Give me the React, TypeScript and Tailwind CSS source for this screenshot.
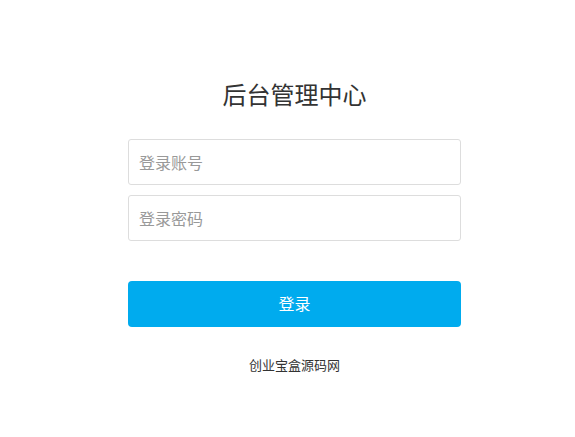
export default function App() {
  return (
    <div
      className="w-[575px] h-[437px] bg-white"
      style={{ fontFamily: '"Liberation Sans", "Noto Sans CJK SC", sans-serif' }}
    >
      <div className="ml-[128px] w-[333px] pt-[78px] flex flex-col">
        <h1 className="text-center text-[24px] leading-[36px] text-[#333]">后台管理中心</h1>

        <div className="mt-[25px] flex flex-col gap-[10px]">
          <input
            className="h-[46px] w-full rounded-[3px] border border-[#ddd] px-[10px] pt-[4px] text-[16px] text-[#333] placeholder:text-[#999] outline-none"
            placeholder="登录账号"
          />
          <input
            type="password"
            className="h-[46px] w-full rounded-[3px] border border-[#ddd] px-[10px] pt-[4px] text-[16px] text-[#333] placeholder:text-[#999] outline-none"
            placeholder="登录密码"
          />
        </div>

        <button className="mt-[40px] h-[46px] w-full rounded-[4px] bg-[#00abee] pt-[2px] text-[16px] text-white">
          登录
        </button>

        <p className="mt-[29px] text-center text-[13px] leading-[20px] text-[#333]">创业宝盒源码网</p>
      </div>
    </div>
  );
}
